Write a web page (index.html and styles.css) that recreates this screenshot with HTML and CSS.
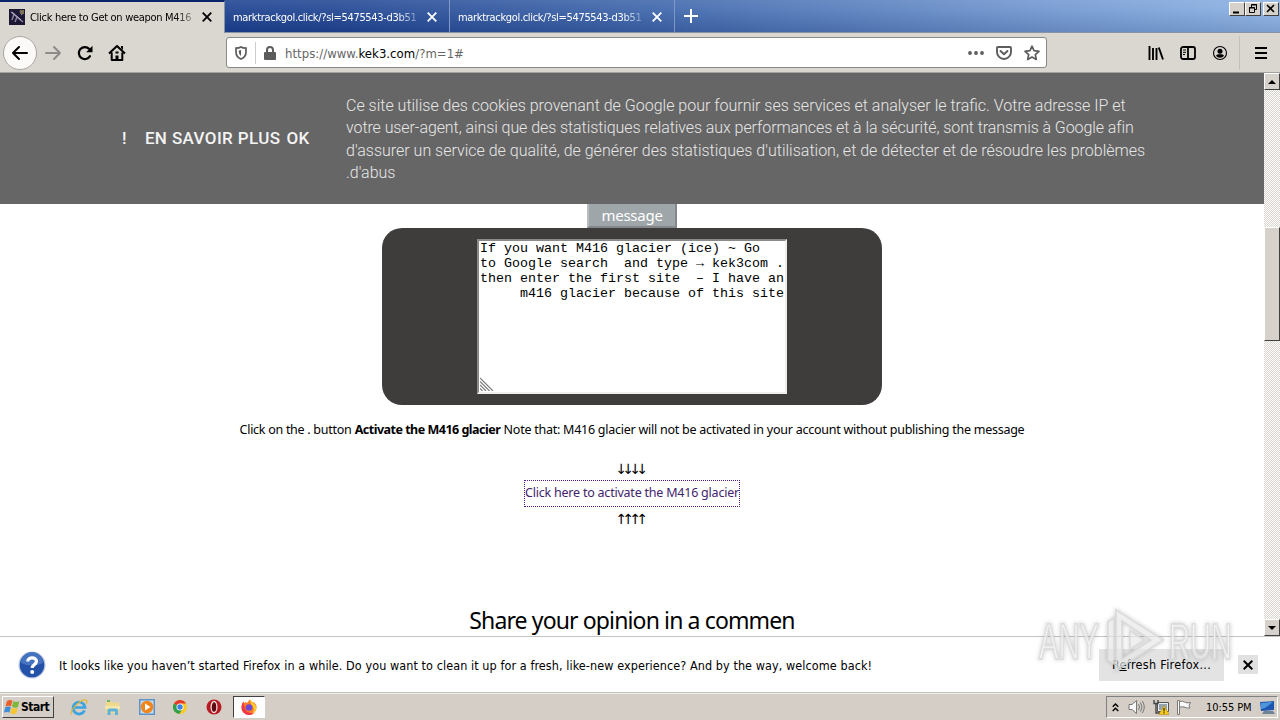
FILE: index.html
```html
<!DOCTYPE html>
<html lang="en">
<head>
<meta charset="utf-8">
<title>Click here to Get on weapon M416</title>
<link rel="stylesheet" href="styles.css">
</head>
<body>
<div class="screen">
  <header class="tabs">
    <div class="tab active">
      <svg class="favicon" width="16" height="16" viewBox="0 0 16 16"><rect width="16" height="16" fill="#1c1733"/><path d="M2 3l12 10M5 5l-2 6M8 8l-2 5M11 2l2 4" stroke="#8d7fa0" stroke-width="1.5"/><path d="M11 1h4v4h-4z" fill="#7b6f54"/><path d="M3 3l9 8" stroke="#c4b9cf"/></svg>
      <span class="tab-title">Click here to Get on weapon M416</span>
      <svg class="x" width="10" height="10" viewBox="0 0 10 10"><path d="M.7.7l8.6 8.6M9.3.7L.7 9.3"/></svg>
    </div>
    <div class="tab">
      <span class="tab-title">marktrackgol.click/?sl=5475543-d3b51</span>
      <svg class="x" width="10" height="10" viewBox="0 0 10 10"><path d="M.7.7l8.6 8.6M9.3.7L.7 9.3"/></svg>
    </div>
    <div class="tab">
      <span class="tab-title">marktrackgol.click/?sl=5475543-d3b51</span>
      <svg class="x" width="10" height="10" viewBox="0 0 10 10"><path d="M.7.7l8.6 8.6M9.3.7L.7 9.3"/></svg>
    </div>
    <svg class="plus" width="14" height="14" viewBox="0 0 14 14"><path d="M7 0v14M0 7h14" stroke="#fff" stroke-width="2"/></svg>
    <div class="win">
      <span class="wbtn"><svg width="14" height="12"><path d="M3 9.5h6" stroke="#000" stroke-width="2"/></svg></span>
      <span class="wbtn"><svg width="14" height="12" fill="none" stroke="#000"><path d="M5.5 4V1.500h5v5H9M5 2h6"/><path d="M3.500 4.500h5v5h-5zM3 5h6"/></svg></span>
      <span class="wbtn last"><svg width="14" height="12"><path d="M3 2l7 7M10 2l-7 7" stroke="#000" stroke-width="1.600"/></svg></span>
    </div>
  </header>

  <nav class="toolbar">
    <span class="back"><svg width="18" height="16" viewBox="0 0 18 16" fill="none" stroke="#000" stroke-width="2" stroke-linecap="round" stroke-linejoin="round"><path d="M16 8H2M8 2L2 8l6 6"/></svg></span>
    <svg class="fwd" width="18" height="16" viewBox="0 0 18 16" fill="none" stroke="#8d8b88" stroke-width="2" stroke-linecap="round" stroke-linejoin="round"><path d="M2 8h14M10 2l6 6-6 6"/></svg>
    <svg class="reload" width="16" height="16" viewBox="0 0 16 16"><path d="M13 11.200A6 6 0 1 1 12.300 4" fill="none" stroke="#000" stroke-width="2.200" stroke-linecap="round"/><path d="M15.500.8v6.400H9.200z"/></svg>
    <svg class="home" width="18" height="16" viewBox="0 0 18 16"><path d="M1 8.500L9 1l8 7.500M3.700 7.500V15h10.600V7.500" fill="none" stroke="#000" stroke-width="2" stroke-linejoin="round"/><path d="M7.500 15v-4.500h3V15zM7.500 6.500h3v2h-3zM13 1h2v4l-2-2z"/></svg>
    <div class="urlbar">
      <svg class="shield" width="12" height="14" viewBox="0 0 12 14"><path d="M6 1C4.500 2 2.800 2.200 1 2.200V6c0 3.500 2 5.800 5 7 3-1.200 5-3.500 5-7V2.200C9.200 2.200 7.500 2 6 1z" fill="none" stroke="#5c5c5c" stroke-width="1.700"/><path d="M6 4v6C4.500 9 3.800 7.500 3.800 4.600z" fill="#5c5c5c"/></svg>
      <i class="urlsep"></i>
      <svg class="lock" width="12" height="14" viewBox="0 0 12 14"><path d="M3 7V4a3 3 0 0 1 6 0v3" fill="none" stroke="#5c5c5c" stroke-width="2"/><rect y="6" width="12" height="8" rx="1" fill="#5c5c5c"/></svg>
      <span class="url">https://www.<b>kek3.com</b>/?m=1#</span>
      <svg class="dots" width="16" height="4" viewBox="0 0 16 4" fill="#5c5c5c"><circle cx="2" cy="2" r="1.900"/><circle cx="8" cy="2" r="1.900"/><circle cx="14" cy="2" r="1.900"/></svg>
      <svg class="pocket" width="16" height="14" viewBox="0 0 16 14" fill="none" stroke="#5c5c5c" stroke-width="1.900"><path d="M2 1h12q1 0 1 1v4a7 7 0 0 1-14 0V2q0-1 1-1z"/><path d="M4.500 5L8 8.300 11.500 5" stroke-linecap="round" stroke-linejoin="round"/></svg>
      <svg class="star" width="16" height="16" viewBox="0 0 16 16" fill="none" stroke="#5c5c5c" stroke-width="1.700" stroke-linejoin="round"><path d="M8 1.200l2 4.500 5 .6-3.700 3.300 1 4.900L8 12l-4.300 2.500 1-4.900L1 6.300l5-.6z"/></svg>
    </div>
    <div class="tools">
      <svg width="16" height="14" viewBox="0 0 16 14" stroke="#000" stroke-width="1.900"><path d="M1.500 0v14M5 2v12M8.500 2v12M10.800 1.500L15 13.500"/></svg>
      <svg width="16" height="14" viewBox="0 0 16 14" fill="none" stroke="#000" stroke-width="1.800"><rect x="1" y="1" width="14" height="12" rx="2"/><path d="M8 1v12"/><path d="M3 4h3M3 6.300h3M3 8.500h2" stroke-width="1"/></svg>
      <svg width="16" height="16" viewBox="0 0 16 16"><circle cx="8" cy="8" r="6.500" fill="none" stroke="#000" stroke-width="1.100"/><circle cx="8" cy="6.200" r="2.500"/><path d="M4 10.800q.5-1.500 2.300-1.500h3.400q1.800 0 2.300 1.500Q10.700 12.800 8 12.800T4 10.800z"/></svg>
    </div>
    <svg class="menu" width="12" height="12" viewBox="0 0 12 12"><path d="M0 1h12M0 6h12M0 11h12" stroke="#000" stroke-width="2"/></svg>
  </nav>

  <main class="view">
    <div class="page">
      <section class="cookie">
        <div class="links"><span>!</span><span class="more">EN SAVOIR PLUS</span><span>OK</span></div>
        <p class="ctext"><span class="c1">Ce site utilise des cookies provenant de Google pour fournir ses services et analyser le trafic. Votre adresse IP et</span><br><span class="c2">votre user-agent, ainsi que des statistiques relatives aux performances et à la sécurité, sont transmis à Google afin</span><br><span class="c3">d'assurer un service de qualité, de générer des statistiques d'utilisation, et de détecter et de résoudre les problèmes</span><br>.d'abus</p>
      </section>
      <div class="msgbtn">message</div>
      <section class="panel">
        <div class="area">
          <div>If you want M416 glacier (ice) ~ Go</div>
          <div>to Google search&nbsp; and type <span class="arrow">→</span> kek3com .</div>
          <div>then enter the first site&nbsp; – I have an</div>
          <div class="right">m416 glacier because of this site</div>
          <svg class="grip" width="14" height="14" viewBox="0 0 14 14"><path d="M0 1l13 13M0 4.500L9.500 14M0 8l6 6M0 11.500L2.500 14" stroke="#777" stroke-width="1.100"/></svg>
        </div>
      </section>
      <p class="note"><span class="n1">Click on the . button</span> <b>Activate the M416 glacier</b> <span class="n2">Note that: M416 glacier will not be activated in your account without publishing the message</span></p>
      <div class="arrows">↓↓↓↓</div>
      <a class="activate">Click here to activate the M416 glacier</a>
      <div class="arrows up">↑↑↑↑</div>
      <h2 class="share">Share your opinion in a commen</h2>
    </div>
    <aside class="scroll">
      <span class="sbtn"><svg width="8" height="4"><path d="M0 4l4-4 4 4z"/></svg></span>
      <span class="thumb"></span>
      <span class="sbtn"><svg width="8" height="4"><path d="M0 0h8L4 4z"/></svg></span>
    </aside>
  </main>

  <section class="notice">
    <svg class="help" width="28" height="28" viewBox="0 0 28 28"><circle cx="14" cy="14" r="13.500" fill="#b9c7e3"/><circle cx="14" cy="14" r="12.300" fill="#2452a8"/><path d="M3 12a11 11 0 0 1 22 0q-11 5-22 0z" fill="#4573c0"/><path d="M9.700 10.500C9.700 5.500 18.500 5.800 18.500 10.300c0 3.200-4.300 3.200-4.300 6.700" fill="none" stroke="#fff" stroke-width="3.200"/><circle cx="14.200" cy="21" r="2" fill="#fff"/></svg>
    <span class="ntext">It looks like you haven’t started Firefox in a while. Do you want to clean it up for a fresh, like-new experience? And by the way, welcome back!</span>
    <span class="refresh"><span>R<u>e</u>fresh Firefox...</span></span>
    <span class="nclose"><svg width="10" height="10" viewBox="0 0 10 10"><path d="M.7.7l8.600 8.600M9.300.7L.7 9.300" stroke="#000" stroke-width="2"/></svg></span>
  </section>

  <footer class="taskbar">
    <div class="start">
      <svg width="16" height="16" viewBox="0 0 16 16"><path d="M3 2q3-2 5.500-.3L7 7.300Q4.500 6 1.500 7.500z" fill="#e8612c"/><path d="M9.300 2.300q3 1.500 6 0L14 8q-3 1.500-6-.2z" fill="#7db73c"/><path d="M1.300 8.300Q4.500 7 6.800 8.200L5.500 13.500Q3 12.300 0 13.500z" fill="#3f8fd8"/><path d="M7.700 8.800q3 1.500 6 .1L12.300 14.500q-3 1.200-6-.5z" fill="#f7c52c"/></svg>
      <b>Start</b>
    </div>
    <div class="apps">
      <svg width="18" height="18" viewBox="0 0 18 18"><path d="M14.500 12.500A6 6 0 1 1 15 9.500H4.500" fill="none" stroke="#3aa4e3" stroke-width="2.700"/><path d="M1.500 16.500C-1 13 12-1 16.500 2.500q1 1-.5 3.500" fill="none" stroke="#e5b52d" stroke-width="1.200"/></svg>
      <svg width="18" height="18" viewBox="0 0 18 18"><path d="M2 3h5l1 1.500h7V15H2z" fill="#f0d98a"/><path d="M3 2h3v2H3z" fill="#6eb36b"/><path d="M1 8h15v3H1z" fill="#f5e6ae"/><path d="M3.500 17v-4.500q0-2 2-2h6.500q2 0 2 2V17h-3v-3.500H6.500V17z" fill="#5db2dc"/></svg>
      <svg width="18" height="18" viewBox="0 0 18 18"><rect x="1" y="1" width="16" height="16" fill="#5b93c9"/><rect x="2.500" y="2.500" width="13" height="13" fill="#c8dcee"/><circle cx="9" cy="9" r="6.200" fill="#f08519"/><path d="M7 5.500L12.500 9 7 12.500z" fill="#fff"/></svg>
      <svg width="18" height="18" viewBox="0 0 18 18"><circle cx="9" cy="9" r="7" fill="#fbc926"/><path d="M9 9L2.900 5.500A7 7 0 0 1 15.100 5.500H9z" fill="#e23b2e"/><path d="M9 9l-6.100-3.500A7 7 0 0 0 8.300 16l3.200-5z" fill="#2f9f4c"/><circle cx="9" cy="9" r="3.500" fill="#fff"/><circle cx="9" cy="9" r="2.700" fill="#4180e8"/></svg>
      <svg width="18" height="18" viewBox="0 0 18 18"><circle cx="9" cy="9" r="7.500" fill="#b81822"/><ellipse cx="9" cy="9" rx="2.900" ry="5.500" fill="#5a0c10" stroke="#f1dede" stroke-width="1.300"/></svg>
      <span class="ff"><svg width="18" height="18" viewBox="0 0 18 18"><path d="M9 17A7.300 7.300 0 0 1 1.500 9.500q0-4 2-6l.8 1.500L6.500 4l.3 1.500Q9 2 10 1.500q1 2 3 3 .5.500.5-.5Q16.500 6 16.500 9.500A7.400 7.400 0 0 1 9 17z" fill="#ff7a28"/><path d="M10 1.500q1 2 3 3 3.500 3 3.500 5.500-1 5-5 6 4-4 1-8T10 1.500z" fill="#ffcb35"/><path d="M1.500 9.500A7.500 7.500 0 0 0 9 17q3 0 5-2-7 1-9-4.500T3.500 3.500q-2 2-2 6z" fill="#f0364c"/><circle cx="9" cy="9.500" r="3.300" fill="#6b48d2"/></svg></span>
    </div>
    <div class="tray">
      <svg class="t1" width="7" height="9" viewBox="0 0 7 9" fill="none" stroke="#000" stroke-width="1.400"><path d="M.7 3.700L3.500 1l2.800 2.700M.7 8L3.500 5.300 6.300 8"/></svg>
      <svg class="t2" width="17" height="16" viewBox="0 0 17 16" fill="none" stroke="#777"><path d="M1 5.500h3L8.500 1.500v13L4 10.500H1z" fill="#f8f8f8"/><path d="M10.500 5q2 3 0 6M12.500 3.500q3 4.500 0 9M14.300 2q4 6 0 12"/></svg>
      <svg class="t3" width="16" height="16" viewBox="0 0 16 16"><path d="M4.500 3.500h11v9h-11z" fill="#e9eef2" stroke="#555"/><path d="M6 5h8v6H6z" fill="#93a5b4"/><path d="M1 1v3.500h4V1M3 4.500V14h4" fill="none" stroke="#444" stroke-width="1.400"/><path d="M11 6.500l5 9H6z" fill="#fdce1c" stroke="#b48912" stroke-width=".6"/><path d="M11 9v3.500M11 13.300v1.200" stroke="#222" stroke-width="1.200"/></svg>
      <svg class="t4" width="17" height="16" viewBox="0 0 17 16" fill="#fafafa" stroke="#777"><path d="M1.500 1.500h2v14h-2z"/><path d="M3.500 2.500q3-1 5 .5t6 .5l-1.500 3 1 2.500q-3 .5-5-.7t-5.500 0z"/></svg>
      <span class="clock">10:55 PM</span>
      <svg class="t5" width="15" height="13" viewBox="0 0 15 13"><path d="M0 1l14-1v9L1 10z" fill="#1c56ae"/><path d="M1 2l12-1-8 6-4 1z" fill="#4e96dc"/><path d="M4 10h9l2 3H2z" fill="#6f8397"/></svg>
    </div>
  </footer>

  <svg class="mark" width="204" height="72" viewBox="0 0 204 72" fill="#fff" fill-opacity=".6" stroke="#dadada" stroke-opacity=".8" stroke-width="2">
    <text x="4" y="54" textLength="60" lengthAdjust="spacingAndGlyphs">ANY</text>
    <text x="134" y="54" textLength="63" lengthAdjust="spacingAndGlyphs">RUN</text>
    <path fill-rule="evenodd" d="M81 5l47 30-47 30zM87 16v38l29-19z"/>
    <path d="M79 13l-6 4v38l6 4zM95 26l14 9-14 9z"/>
  </svg>
</div>
</body>
</html>
```
FILE: styles.css
```css
* { box-sizing: border-box; }
body { margin: 0; background: #fff; }
svg { display: block; flex: none; }
.screen { position: relative; width: 1280px; height: 720px; overflow: hidden; display: flex; flex-direction: column; font-family: "DejaVu Sans Condensed", "DejaVu Sans", sans-serif; font-size: 11px; color: #000; }

.tabs { height: 33px; flex: none; display: flex; background: linear-gradient(180deg, rgba(255,255,255,.13) 0, rgba(255,255,255,.08) 30%, rgba(0,0,30,.1) 100%), linear-gradient(90deg, #14398a 0, #1f4492 25%, #3e66ab 52%, #7096d0 82%, #8ab1e3 100%); border-bottom: 1px solid #8794a5; }
.tab { width: 225px; height: 32px; padding: 0 12px 0 8px; display: flex; align-items: center; color: #fff; border-right: 1px solid #7f99c6; }
.tab-title { flex: 1; overflow: hidden; white-space: nowrap; margin-right: 4px; padding-top: 3px; line-height: 18px; letter-spacing: -.32px; -webkit-mask-image: linear-gradient(90deg, #000 86%, rgba(0,0,0,.1)); mask-image: linear-gradient(90deg, #000 86%, rgba(0,0,0,.1)); }
.tab .x { stroke: #fff; stroke-width: 1.800; margin-top: 1px; }
.tab.active { height: 33px; background: #dad6d0; color: #000; border-top: 2px solid #0a246a; border-right-color: #8794a5; }
.tab.active .tab-title { letter-spacing: -.3px; margin-top: -3px; }
.tab.active .x { stroke: #000; margin-top: -1px; }
.favicon { margin: -2px 5px 0 1px; }
.plus { margin: 9px 0 0 9px; }
.win { margin: 2px 1px 0 auto; display: flex; }
.wbtn { width: 16px; height: 14px; background: #d6d2cb; border: 1px solid; border-color: #fff #404040 #404040 #fff; }
.wbtn.last { margin-left: 2px; }

.toolbar { height: 40px; flex: none; background: #dad6d0; border-bottom: 1px solid #a5a29d; display: flex; align-items: center; }
.back { width: 34px; height: 34px; margin-left: 3px; border: 1px solid #aaa7a2; border-radius: 50%; background: #fbfaf9; display: flex; align-items: center; justify-content: center; }
.fwd { margin-left: 7px; }
.reload { margin-left: 15px; }
.home { margin-left: 15px; }
.urlbar { width: 821px; height: 31px; margin-left: 100px; background: #fff; border: 1px solid #8a8883; border-radius: 3px; display: flex; align-items: center; padding-left: 8px; }
.urlsep { width: 1px; height: 22px; background: #ccc; margin: 0 8px; }
.url { margin-left: 9px; padding-top: 2px; color: #666; font: 13px/18px "DejaVu Sans Condensed", sans-serif; letter-spacing: .03px; }
.url b { color: #000; font-weight: 400; }
.dots { margin-left: auto; }
.pocket { margin-left: 12px; }
.star { margin: 0 6px 0 12px; }
.tools { display: flex; gap: 16px; align-items: center; margin-left: 101px; padding-right: 11px; height: 34px; border-right: 1px solid #c4c0ba; }
.menu { margin-left: 15px; }

.view { height: 563px; flex: none; display: flex; overflow: hidden; }
.page { width: 1264px; display: flex; flex-direction: column; align-items: center; background: #fff; font-family: "Noto Sans", sans-serif; }
.cookie { width: 100%; height: 131px; flex: none; background: #666; display: flex; padding: 21.600px 0 0 122px; font-family: Roboto, sans-serif; color: #f4f4f4; }
.links { width: 224px; display: flex; padding-top: 32px; font: 500 17px/22px Roboto, sans-serif; letter-spacing: .38px; }
.more { margin: 0 6px 0 18px; white-space: nowrap; }
.ctext { margin: 0; font: 300 16px/22.500px Roboto, sans-serif; color: #e6e6e6; white-space: nowrap; }
.c2 { letter-spacing: -.08px; }
.msgbtn { width: 90px; height: 24px; flex: none; background: #9ea6aa; border: solid #85888a; border-width: 0 2px 2px; border-left-color: #b7bcbe; color: #fff; font-size: 15px; letter-spacing: -.25px; line-height: 22px; text-align: center; }
.panel { width: 500px; height: 177px; flex: none; border-radius: 20px; background: #3f3c3c; display: flex; justify-content: center; padding-top: 11px; }
.area { position: relative; width: 310px; height: 155px; background: #fff; border: 2px solid; border-color: #8a8a8a #eee #eee #8a8a8a; font: 13.330px/15px "Liberation Mono", monospace; padding: 0 0 0 1px; white-space: nowrap; }
.area div { height: 15px; }
.arrow { display: inline-block; width: 8px; font-family: "Liberation Mono", monospace; }
.right { text-align: right; padding-right: 1px; }
.grip { position: absolute; left: 1px; bottom: 1px; }
.note { margin: 15px 0 0; font-size: 12.500px; line-height: 20px; white-space: nowrap; }
.n1 { letter-spacing: -.28px; }
.n2 { letter-spacing: -.25px; }
.note b { letter-spacing: -.5px; }
.arrows { margin: 19px 5px 0 0; font: 14px/20px "Noto Sans", "DejaVu Sans", sans-serif; letter-spacing: -4.700px; }
.activate { margin-top: 1px; width: 216px; height: 27px; flex: none; border: 1px dotted #551a8b; color: #42246b; font-size: 12.500px; letter-spacing: -.22px; line-height: 24px; white-space: nowrap; display: flex; justify-content: center; }
.arrows.up { margin-top: 2px; }
.share { margin: 74px 0 0; font: 400 23px/35px "Noto Sans", sans-serif; letter-spacing: -.87px; white-space: nowrap; }
.scroll { width: 16px; display: flex; flex-direction: column; background: repeating-conic-gradient(#fff 0 25%, #d8d4cd 0 50%) 0 0 / 2px 2px; }
.sbtn { height: 17px; flex: none; background: #d6d2cb; border: 1px solid; border-color: #fff #404040 #404040 #fff; display: flex; align-items: center; justify-content: center; }
.thumb { height: 114px; margin: 137px 0 auto; background: #d6d2cb; border: 1px solid; border-color: #fff #404040 #404040 #fff; }

.notice { height: 56px; flex: none; border-top: 1px solid #c4c4c4; background: #fff; display: flex; align-items: center; padding: 0 22px 0 18px; }
.ntext { margin-left: 13px; font-size: 12.500px; letter-spacing: .08px; white-space: nowrap; padding-top: 2px; }
.refresh { margin-left: auto; width: 125px; height: 32px; background: #e3e3e3; display: flex; align-items: center; justify-content: center; font-size: 12.500px; letter-spacing: .3px; }
.nclose { margin-left: 14px; width: 20px; height: 19px; background: #e1e1e1; display: flex; align-items: center; justify-content: center; }

.taskbar { height: 28px; flex: none; background: #d5cec6; border-top: 1px solid #c2c0ba; box-shadow: inset 0 1px #f2f0ed; display: flex; align-items: center; padding: 1px 2px 0; }
.start { width: 52px; height: 22px; border: 1px solid; border-color: #fff #404040 #404040 #fff; display: flex; align-items: center; padding-left: 1px; font-size: 12px; letter-spacing: -.5px; }
.start b { margin-left: 1px; }
.apps { display: flex; align-items: center; margin-left: 16px; gap: 15.800px; }
.ff { width: 32px; height: 22px; margin-left: -6px; border: 1px solid; border-color: #404040 #fff #fff #404040; background: #fdfdfd; display: flex; align-items: center; justify-content: center; }
.tray { margin-left: auto; width: 172px; height: 22px; border: 1px solid; border-color: #808080 #fff #fff #808080; display: flex; align-items: center; padding-left: 5px; }
.t2 { margin-left: 9px; }
.t3 { margin-left: 8px; }
.t4 { margin-left: 7px; }
.clock { width: 46px; margin-left: 13px; white-space: nowrap; letter-spacing: -.08px; }
.t5 { margin-left: 8px; }
.mark { position: absolute; left: 1035px; top: 605px; filter: drop-shadow(0 0 2px rgba(0,0,0,.25)); }
.mark text { font: 400 50px "Liberation Sans", sans-serif; }
```
